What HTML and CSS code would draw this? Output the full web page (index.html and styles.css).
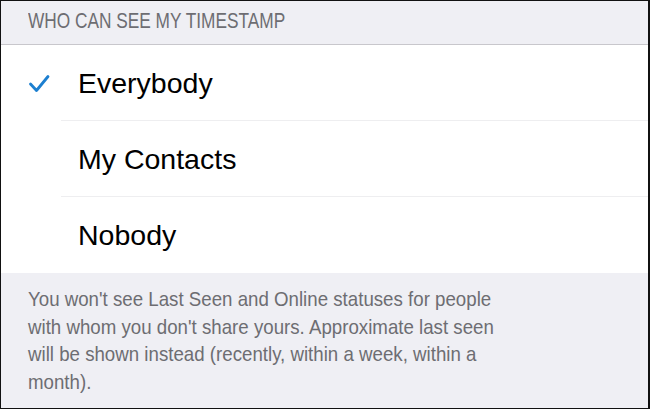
FILE: index.html
```html
<!DOCTYPE html>
<html>
<head>
<meta charset="utf-8">
<link rel="stylesheet" href="styles.css">
</head>
<body>
<div class="frame">
  <div class="header"><span class="header-text">WHO CAN SEE MY TIMESTAMP</span></div>
  <div class="list">
    <div class="row">
      <span class="check"><svg width="22" height="19" viewBox="0 0 22 19"><path d="M2.5 10 L8.5 16.5 L20 2.5" fill="none" stroke="#1c7fd0" stroke-width="2.8" stroke-linecap="round" stroke-linejoin="round"/></svg></span>
      <span class="label">Everybody</span>
    </div>
    <div class="row">
      <span class="check"></span>
      <span class="label">My Contacts</span>
    </div>
    <div class="row last">
      <span class="check"></span>
      <span class="label">Nobody</span>
    </div>
  </div>
  <div class="footer"><p class="footer-text">You won't see Last Seen and Online statuses for people with whom you don't share yours. Approximate last seen will be shown instead (recently, within a week, within a month).</p></div>
</div>
</body>
</html>
```
FILE: styles.css
```css
html, body {
  margin: 0;
  padding: 0;
}
body {
  width: 650px;
  height: 409px;
  overflow: hidden;
  font-family: "Liberation Sans", Arial, sans-serif;
}
.frame {
  box-sizing: border-box;
  width: 650px;
  height: 409px;
  border: 1px solid #111;
  border-right-width: 2px;
  background: #efeff4;
  display: flex;
  flex-direction: column;
  overflow: hidden;
}
.header {
  height: 44px;
  flex: none;
  box-sizing: border-box;
  padding: 7px 0 0 27px;
  color: #6d6d72;
  border-bottom: 1px solid #c8c7cc;
  white-space: nowrap;
}
.header-text {
  display: inline-block;
  font-size: 22px;
  transform: scaleX(0.785);
  transform-origin: left center;
}
.list {
  background: #fff;
  display: flex;
  flex-direction: column;
  flex: none;
}
.row {
  height: 76px;
  display: flex;
  align-items: center;
  position: relative;
}
.row::after {
  content: "";
  position: absolute;
  left: 60px;
  right: 0;
  bottom: 0;
  height: 1px;
  background: #eeeef0;
}
.row.last::after {
  display: none;
}
.check {
  width: 77px;
  box-sizing: border-box;
  padding-left: 27px;
  display: flex;
  align-items: center;
}
.label {
  font-size: 28.5px;
  color: #000;
}
.footer {
  padding: 12px 0 0 27px;
}
.footer-text {
  margin: 0;
  width: 544px;
  font-size: 21px;
  line-height: 27.5px;
  color: #6d6d72;
  transform: scaleX(0.89);
  transform-origin: left top;
}
```
